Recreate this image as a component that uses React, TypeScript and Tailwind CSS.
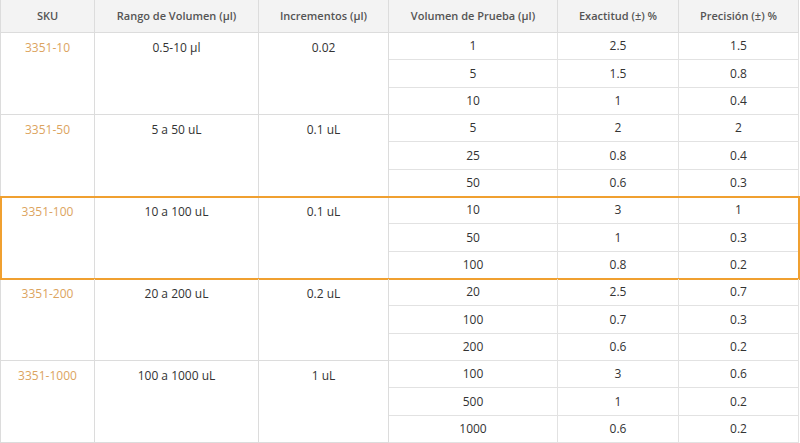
const cols = "grid grid-cols-[94px_164px_130px_169px_121px_120px]";

interface Group {
  sku: string;
  rango: string;
  inc: string;
  rows: [string, string, string][];
  highlight?: boolean;
}

const groups: Group[] = [
  {
    sku: "3351-10",
    rango: "0.5-10 µl",
    inc: "0.02",
    rows: [
      ["1", "2.5", "1.5"],
      ["5", "1.5", "0.8"],
      ["10", "1", "0.4"],
    ],
  },
  {
    sku: "3351-50",
    rango: "5 a 50 uL",
    inc: "0.1 uL",
    rows: [
      ["5", "2", "2"],
      ["25", "0.8", "0.4"],
      ["50", "0.6", "0.3"],
    ],
  },
  {
    sku: "3351-100",
    rango: "10 a 100 uL",
    inc: "0.1 uL",
    highlight: true,
    rows: [
      ["10", "3", "1"],
      ["50", "1", "0.3"],
      ["100", "0.8", "0.2"],
    ],
  },
  {
    sku: "3351-200",
    rango: "20 a 200 uL",
    inc: "0.2 uL",
    rows: [
      ["20", "2.5", "0.7"],
      ["100", "0.7", "0.3"],
      ["200", "0.6", "0.2"],
    ],
  },
  {
    sku: "3351-1000",
    rango: "100 a 1000 uL",
    inc: "1 uL",
    rows: [
      ["100", "3", "0.6"],
      ["500", "1", "0.2"],
      ["1000", "0.6", "0.2"],
    ],
  },
];

const headers = [
  "SKU",
  "Rango de Volumen (µl)",
  "Incrementos (µl)",
  "Volumen de Prueba (µl)",
  "Exactitud (±) %",
  "Precisión (±) %",
];

export default function App() {
  return (
    <div
      className="w-[800px] h-[443px] bg-white overflow-hidden text-[#333]"
      style={{ fontFamily: '"Open Sans", "Liberation Sans", sans-serif' }}
    >
      <div className="w-[798px] border-l border-[#dcdcdc]">
        {/* header */}
        <div className={`${cols} h-[33px] bg-[#f3f3f3]`}>
          {headers.map((h) => (
            <div
              key={h}
              className="flex items-center justify-center border-r border-b border-[#dcdcdc] text-[11px] font-semibold text-[#555]"
            >
              {h}
            </div>
          ))}
        </div>

        {groups.map((g) => (
          <div key={g.sku} className={`${cols} grid-rows-[27px_28px_27px] h-[82px] relative`}>
            <div className="row-span-3 border-r border-b border-[#dcdcdc] text-center pt-[6px] text-[12px] text-[#dca460]">
              {g.sku}
            </div>
            <div className="row-span-3 border-r border-b border-[#dcdcdc] text-center pt-[6px] text-[12px]">
              {g.rango}
            </div>
            <div className="row-span-3 border-r border-b border-[#dcdcdc] text-center pt-[6px] text-[12px]">
              {g.inc}
            </div>
            {g.rows.map((r, i) =>
              r.map((v, j) => (
                <div
                  key={`${i}-${j}`}
                  className="flex items-center justify-center border-r border-b border-[#e2e2e2] text-[12px]"
                >
                  {v}
                </div>
              ))
            )}
            {g.highlight && (
              <span className="absolute -top-[1px] -bottom-[1px] -left-[1px] -right-[2px] border-2 border-[#f0a030] pointer-events-none" />
            )}
          </div>
        ))}
      </div>
    </div>
  );
}
